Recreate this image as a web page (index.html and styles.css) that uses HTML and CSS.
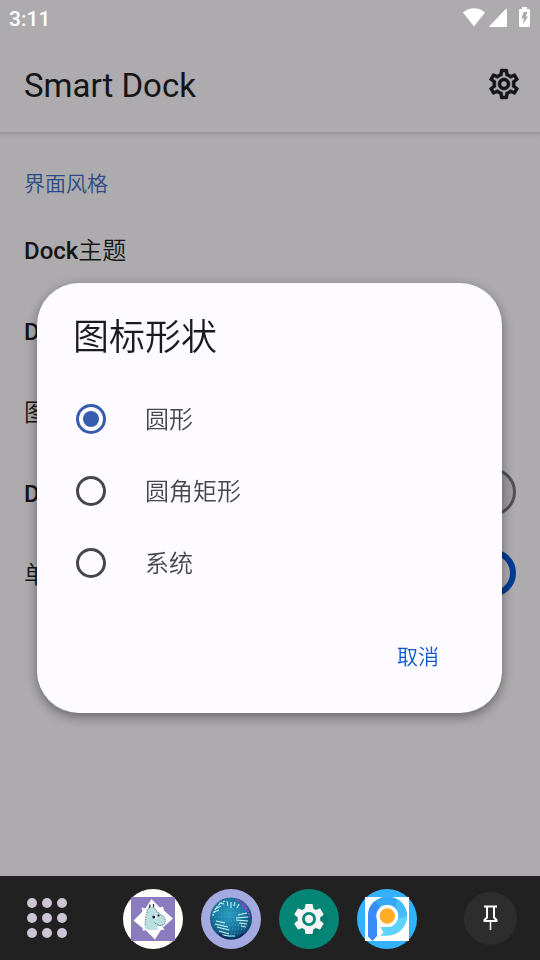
FILE: index.html
```html
<!DOCTYPE html>
<html lang="zh-CN">
<head>
<meta charset="utf-8">
<meta name="viewport" content="width=device-width, initial-scale=1">
<title>Smart Dock</title>
<link rel="stylesheet" href="styles.css">
</head>
<body>
<div class="status">
  <span class="time">3:11</span>
  <svg class="status-icons" viewBox="0 0 70 24" aria-hidden="true">
    <path fill="#fff" d="M1 6.500C7 .700 17 .700 23 6.500L12 20.500Z"/>
    <path fill="#fff" d="M45 3v17a1 1 0 0 1-1 1H28c-.8 0-1-.6-.5-1.100L43.500 3.300c.6-.6 1.500-.8 1.500-.3Z"/>
    <path fill="#fff" d="M60 1h5v2h2q1 0 1 1v16q0 1-1 1h-9q-1 0-1-1V4q0-1 1-1h2Z"/>
    <path fill="#adabae" d="M61.500 6h4l-1.700 4.500H66L61 18l.8-5.500H59.500Z"/>
  </svg>
</div>
<header class="appbar">
  <h1>Smart Dock</h1>
  <button class="icon-button" type="button" aria-label="设置">
    <svg viewBox="0 0 24 24" width="36" height="36"><path fill="#151517" stroke="#151517" stroke-width=".3" d="M19.430 12.980c.04-.32.07-.64.07-.98 0-.34-.03-.66-.07-.98l2.110-1.650c.19-.15.24-.42.12-.64l-2-3.460c-.09-.16-.26-.25-.44-.25-.06 0-.12.01-.17.03l-2.490 1c-.52-.4-1.080-.73-1.690-.98l-.38-2.650C14.460 2.180 14.250 2 14 2h-4c-.25 0-.46.18-.49.42l-.38 2.650c-.61.25-1.170.59-1.690.98l-2.490-1c-.06-.02-.12-.03-.18-.03-.17 0-.34.09-.43.25l-2 3.460c-.13.22-.07.49.12.64l2.110 1.650c-.04.32-.07.65-.07.98 0 .33.03.66.07.98l-2.110 1.650c-.19.15-.24.42-.12.64l2 3.460c.09.16.26.25.44.25.06 0 .12-.01.17-.03l2.490-1c.52.4 1.080.73 1.690.98l.38 2.650c.03.24.24.42.49.42h4c.25 0 .46-.18.49-.42l.38-2.650c.61-.25 1.170-.59 1.690-.98l2.490 1c.06.02.12.03.18.03.17 0 .34-.09.43-.25l2-3.460c.12-.22.07-.49-.12-.64l-2.110-1.650zm-1.980-1.710c.04.31.05.52.05.73 0 .21-.02.43-.05.73l-.14 1.130.89.7 1.080.84-.7 1.210-1.270-.51-1.040-.42-.9.68c-.43.32-.84.56-1.250.73l-1.060.43-.16 1.130-.2 1.350h-1.400l-.19-1.350-.16-1.130-1.060-.43c-.43-.18-.83-.41-1.230-.71l-.91-.7-1.060.43-1.270.51-.7-1.210 1.080-.84.89-.7-.14-1.130c-.03-.31-.05-.54-.05-.74s.02-.43.05-.73l.14-1.130-.89-.7-1.080-.84.7-1.210 1.270.51 1.040.42.9-.68c.43-.32.84-.56 1.250-.73l1.060-.43.16-1.130.2-1.350h1.390l.19 1.350.16 1.130 1.060.43c.43.18.83.41 1.230.71l.91.7 1.060-.43 1.270-.51.7 1.210-1.070.85-.89.7.14 1.130zM12 8c-2.210 0-4 1.790-4 4s1.790 4 4 4 4-1.790 4-4-1.790-4-4-4zm0 6c-1.100 0-2-.9-2-2s.9-2 2-2 2 .9 2 2-.9 2-2 2z"/></svg>
  </button>
</header>
<main class="settings">
  <h2>界面风格</h2>
  <div class="row"><span><b>Dock</b>主题</span></div>
  <div class="row"><b>Dock</b></div>
  <div class="row">图标形状</div>
  <label class="row"><b>Dock</b><input class="switch" type="checkbox"></label>
  <label class="row">单<input class="switch" type="checkbox" checked></label>
</main>
<nav class="dock">
  <button class="launcher" type="button" aria-label="应用">
    <svg viewBox="0 0 40 40" width="40" height="40" fill="#cdc4d4"><circle cx="5" cy="5" r="5"/><circle cx="20" cy="5" r="5"/><circle cx="35" cy="5" r="5"/><circle cx="5" cy="20" r="5"/><circle cx="20" cy="20" r="5"/><circle cx="35" cy="20" r="5"/><circle cx="5" cy="35" r="5"/><circle cx="20" cy="35" r="5"/><circle cx="35" cy="35" r="5"/></svg>
  </button>
  <div class="apps">
    <button type="button" aria-label="Moomin">
      <svg viewBox="0 0 60 60"><circle cx="30" cy="30" r="30" fill="#fefef8"/><path fill="#8b7bbf" d="M8 8h44v44H8z"/>
        <path fill="#fff" d="M28.500 10 37 18.500l3-1 1 4 9 8L40 38.500l1.500 2.500-3.500 0-6 9.500L22.500 41l-2.500 1-.500-3-9-7.500 9-9-1-4 4 1Z"/>
        <path fill="#b9dfe0" d="M24 25c0-4 1-6 2.500-6.500L27 15l2 3.500L30.500 15l1 4.500c2.500 2.500 4 5 7 6.500 3 1.500 4.500 5 3.500 8-1 3-5 3.500-8 3 0 1.500 1 2 1.500 3C32 42 26 41 21.500 39.500c0-3 1.500-5.500 1-7.500Z"/>
        <path fill="none" stroke="#3e5057" stroke-width=".8" stroke-dasharray="1.400 1" d="M22 36c1-4 0-8 2-11 0-4 1-6 2.500-6.500M31.500 19.500c2.500 2.500 4 5 7 6.500 3 1.500 4.500 5 3.500 8-2 4-8 3-11-1"/>
        <path fill="none" stroke="#26343a" stroke-width="1.200" d="M26.500 19 27 15.500M30.500 18.500V15"/>
        <ellipse cx="32" cy="28" rx="1.800" ry="2" fill="#fff"/><circle cx="30.800" cy="28" r="1.500" fill="#182128"/><circle cx="35.500" cy="26.500" r="1.100" fill="#182128"/></svg>
    </button>
    <button type="button" aria-label="浏览器">
      <svg viewBox="0 0 60 60"><defs><radialGradient id="globe" cx=".45" cy=".4" r=".6"><stop offset="0" stop-color="#2d9dc0"/><stop offset=".6" stop-color="#1a779f"/><stop offset="1" stop-color="#12426b"/></radialGradient></defs>
        <circle cx="30" cy="30" r="30" fill="#a4aae0"/><circle cx="30" cy="29.500" r="21" fill="url(#globe)"/>
        <g fill="none" stroke="#4dc0d8" stroke-width=".8" stroke-dasharray="1 2" opacity=".7"><path d="M14 20h31M11 24h36M11 28h36M12 32h36M13 36h34M22 40h22M24 44h17M20 16h20"/></g>
        <g fill="none" stroke="#c9f3f4" stroke-width="1.100"><path d="m15 32 9 2m-10 1 13 3m-11 0 12 3m-10 1 10 3m-7 1 7 1M37 26l9-2m-11 5 12-1m-12 3 12 1m-9 2 8 1m-6 2 5 1M13 23l5-2m-4-1 6-3m-2-3 5 1m3-3 1 5m3-4v6m4-6-1 4m5-2-2 4"/><path stroke-dasharray="2 1" d="M12 27c1-7 5-12 12-15"/></g>
        <path d="M36 11c7 3 12 9 12 17m-7-12 4 6" fill="none" stroke="#a643dd" stroke-width="1.500" stroke-dasharray="2 1"/>
        <path d="M18 45c7 6 18 6 24 0" fill="none" stroke="#0b2b56" stroke-width="2"/><path d="M28 47h6" stroke="#68cfe8" stroke-width="1.500"/></svg>
    </button>
    <button type="button" aria-label="系统设置">
      <svg viewBox="0 0 60 60"><circle cx="30" cy="30" r="30" fill="#048576"/><path fill="#047b6e" d="m44 23 6 7-6 10-9 7-11-4Z"/>
        <path transform="translate(12 12) scale(1.500)" fill="#f5f5f5" d="M19.430 12.980c.04-.32.07-.64.07-.98 0-.34-.03-.66-.07-.98l2.110-1.650c.19-.15.24-.42.12-.64l-2-3.460c-.09-.16-.26-.25-.44-.25-.06 0-.12.01-.17.03l-2.490 1c-.52-.4-1.080-.73-1.690-.98l-.38-2.650C14.460 2.180 14.250 2 14 2h-4c-.25 0-.46.18-.49.42l-.38 2.650c-.61.25-1.170.59-1.690.98l-2.490-1c-.06-.02-.12-.03-.18-.03-.17 0-.34.09-.43.25l-2 3.460c-.13.22-.07.49.12.64l2.110 1.650c-.04.32-.07.65-.07.98 0 .33.03.66.07.98l-2.110 1.650c-.19.15-.24.42-.12.64l2 3.460c.09.16.26.25.44.25.06 0 .12-.01.17-.03l2.490-1c.52.4 1.080.73 1.690.98l.38 2.650c.03.24.24.42.49.42h4c.25 0 .46-.18.49-.42l.38-2.650c.61-.25 1.170-.59 1.690-.98l2.490 1c.06.02.12.03.18.03.17 0 .34-.09.43-.25l2-3.460c.12-.22.07-.49-.12-.64Z"/>
        <circle cx="30" cy="30" r="7" fill="#048576"/><circle cx="30" cy="30" r="4.200" fill="#f5f5f5"/></svg>
    </button>
    <button type="button" aria-label="视频">
      <svg viewBox="0 0 60 60"><circle cx="30" cy="30" r="30" fill="#34b1ff"/><path fill="#fff" d="M8 8h44v44H8z"/>
        <path fill="#34a9f6" d="M11 27a19.500 19.500 0 0 1 39 0H41a11 11 0 0 0-22 0Z"/>
        <path fill="#3b8cfb" d="M11 27c0-7 3-12 7-15l6 8c-3 1-4 4-4 8v19l-4.500 5L11 47.500Z"/>
        <path fill="#45bdf8" d="M40 10c6 3 10 10 10 17 0 8-5 14-11 17.500L36 36c3-2 5-5 5-9 0-3-1-5-3-7Z"/>
        <path fill="#5bd3fb" d="M50 27c0 11-9 19.700-20 19.700h-7l3.500-3-3-5.700h7c5 0 9-3 10.500-8Z"/>
        <circle cx="30.300" cy="27" r="11" fill="#fff"/><circle cx="30.300" cy="27" r="7.700" fill="#ffae25"/></svg>
    </button>
  </div>
  <button class="pin" type="button" aria-label="固定">
    <svg viewBox="0 0 24 26" width="24" height="26" fill="none" stroke="#fff"><path stroke-width="2" d="M5 1.500h13M8 2v10.500L5.500 15v1h12v-1L15 12.500V2"/><path stroke-width="1.500" d="M11.500 17v8"/></svg>
  </button>
</nav>
<div class="overlay">
  <form class="dialog" role="dialog" aria-labelledby="dialog-title">
    <h2 id="dialog-title">图标形状</h2>
    <label class="option"><input type="radio" name="shape" checked><span>圆形</span></label>
    <label class="option"><input type="radio" name="shape"><span>圆角矩形</span></label>
    <label class="option"><input type="radio" name="shape"><span>系统</span></label>
    <div class="actions"><button type="button">取消</button></div>
  </form>
</div>
</body>
</html>
```
FILE: styles.css
```css
* {
  box-sizing: border-box;
}

body {
  margin: 0;
  min-height: 100vh;
  display: flex;
  flex-direction: column;
  background: #adabae;
  color: #151517;
  font-family: Roboto, "Noto Sans CJK SC", sans-serif;
  font-size: 24px;
  font-weight: 350;
  line-height: 36px;
}

h1,
h2 {
  margin: 0;
  font-weight: 350;
}

b {
  font-weight: 500;
}

button {
  padding: 0;
  border: 0;
  background: none;
  font: inherit;
  cursor: pointer;
}

svg {
  display: block;
}

.status {
  display: flex;
  align-items: center;
  justify-content: space-between;
  height: 36px;
  padding: 0 8px 0 9px;
}

.time {
  padding-top: 2px;
  color: #fff;
  font-size: 21px;
  font-weight: 500;
}

.status-icons {
  width: 70px;
  height: 24px;
}

.appbar {
  display: flex;
  align-items: center;
  justify-content: space-between;
  height: 96px;
  padding: 0 18px 0 24px;
}

.appbar h1 {
  padding-top: 4px;
  font-size: 33px;
  font-weight: 400;
}

.settings {
  flex: 1;
  padding-top: 34px;
  background: linear-gradient(#979598, #adabae 5px);
}

.settings h2 {
  padding: 0 24px;
  color: #2c4a86;
  font-size: 21px;
}

.row {
  display: flex;
  align-items: center;
  justify-content: space-between;
  height: 81px;
  padding: 0 24px;
}

.settings h2 + .row {
  margin-top: 8px;
}

.switch {
  appearance: none;
  display: flex;
  align-items: center;
  width: 78px;
  height: 48px;
  margin: 0 0 4px;
  padding: 0 9px;
  border: 3px solid #515055;
  border-radius: 24px;
  background: #9c9a9f;
}

.switch::before {
  content: "";
  width: 24px;
  height: 24px;
  border-radius: 50%;
  background: #515055;
}

.switch:checked {
  justify-content: flex-end;
  padding: 0 3px;
  border-color: #003c93;
  background: #003c93;
}

.switch:checked::before {
  width: 36px;
  height: 36px;
  background: #adabae;
}

.dock {
  display: flex;
  align-items: center;
  height: 84px;
  padding: 0 23px 0 27px;
  background: #212121;
}

.apps {
  display: flex;
  flex: 1;
  gap: 18px;
  padding: 2px 0 0 56px;
}

.apps svg {
  width: 60px;
  height: 60px;
}

.pin {
  display: grid;
  place-items: center;
  width: 53px;
  height: 53px;
  border-radius: 50%;
  background: #2d2d2d;
}

.overlay {
  position: fixed;
  inset: 36px 0 0;
  display: flex;
  align-items: center;
  padding: 0 38px 0 37px;
}

.dialog {
  flex: 1;
  padding: 31px 36px 35px;
  border-radius: 42px;
  background: #fdfbff;
  box-shadow: 0 4px 12px rgba(0, 0, 0, 0.4);
}

.dialog h2 {
  margin-bottom: 21px;
  color: #1b1b1f;
  font-size: 36px;
  line-height: 48px;
}

.option {
  display: flex;
  align-items: center;
  gap: 39px;
  height: 72px;
  padding-left: 3px;
  color: #45464f;
}

.option span {
  padding-top: 2px;
}

.option input {
  appearance: none;
  display: grid;
  place-items: center;
  width: 30px;
  height: 30px;
  margin: 0;
  border: 3px solid #47464d;
  border-radius: 50%;
}

.option input:checked {
  border-color: #365cad;
}

.option input:checked::before {
  content: "";
  width: 16px;
  height: 16px;
  border-radius: 50%;
  background: #365cad;
}

.actions {
  display: flex;
  justify-content: flex-end;
  padding: 37px 9px 0;
}

.actions button {
  height: 42px;
  padding: 0 18px;
  color: #0b57d0;
  font-size: 21px;
}
```
